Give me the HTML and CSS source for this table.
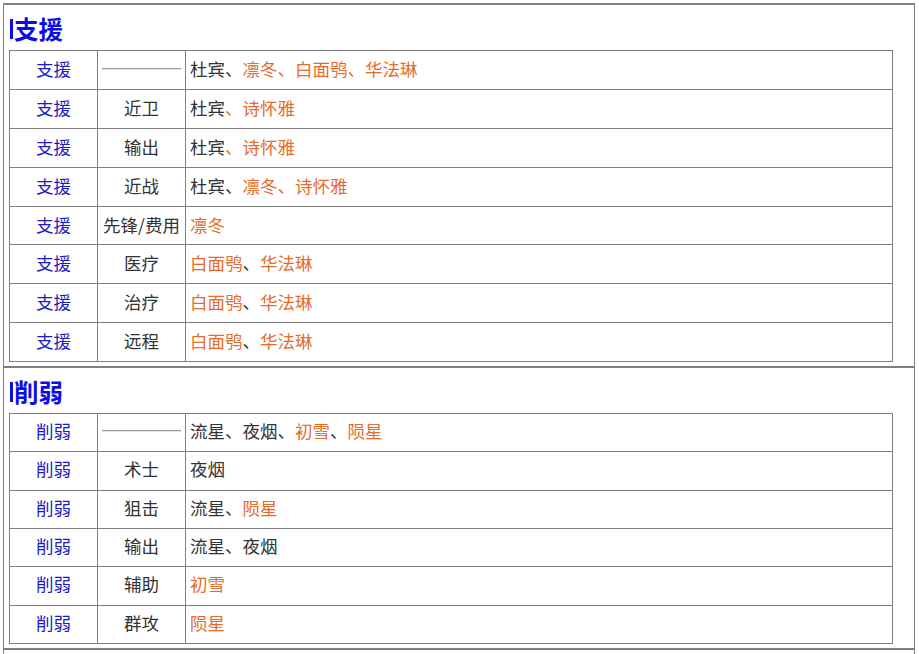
FILE: index.html
```html
<!DOCTYPE html>
<html lang="zh">
<head>
<meta charset="utf-8">
<link rel="stylesheet" href="styles.css">
</head>
<body>
<div class="page">
  <section class="sec">
    <h2 class="title"><span class="bar"></span>支援</h2>
    <table class="tbl">
      <colgroup><col class="c1"><col class="c2"><col></colgroup>
      <tr><td class="k">支援</td><td class="m"><hr class="rule"></td><td class="v">杜宾、<span class="o">凛冬、白面鸮、华法琳</span></td></tr>
      <tr><td class="k">支援</td><td class="m">近卫</td><td class="v">杜宾<span class="o">、诗怀雅</span></td></tr>
      <tr><td class="k">支援</td><td class="m">输出</td><td class="v">杜宾<span class="o">、诗怀雅</span></td></tr>
      <tr><td class="k">支援</td><td class="m">近战</td><td class="v">杜宾、<span class="o">凛冬、诗怀雅</span></td></tr>
      <tr><td class="k">支援</td><td class="m">先锋/费用</td><td class="v"><span class="o">凛冬</span></td></tr>
      <tr><td class="k">支援</td><td class="m">医疗</td><td class="v"><span class="o">白面鸮</span>、<span class="o">华法琳</span></td></tr>
      <tr><td class="k">支援</td><td class="m">治疗</td><td class="v"><span class="o">白面鸮</span>、<span class="o">华法琳</span></td></tr>
      <tr><td class="k">支援</td><td class="m">远程</td><td class="v"><span class="o">白面鸮</span>、<span class="o">华法琳</span></td></tr>
    </table>
  </section>
  <section class="sec">
    <h2 class="title"><span class="bar"></span>削弱</h2>
    <table class="tbl tbl2">
      <colgroup><col class="c1"><col class="c2"><col></colgroup>
      <tr><td class="k">削弱</td><td class="m"><hr class="rule"></td><td class="v">流星、夜烟、<span class="o">初雪</span>、<span class="o">陨星</span></td></tr>
      <tr><td class="k">削弱</td><td class="m">术士</td><td class="v">夜烟</td></tr>
      <tr><td class="k">削弱</td><td class="m">狙击</td><td class="v">流星、<span class="o">陨星</span></td></tr>
      <tr><td class="k">削弱</td><td class="m">输出</td><td class="v">流星、夜烟</td></tr>
      <tr><td class="k">削弱</td><td class="m">辅助</td><td class="v"><span class="o">初雪</span></td></tr>
      <tr><td class="k">削弱</td><td class="m">群攻</td><td class="v"><span class="o">陨星</span></td></tr>
    </table>
  </section>
  <section class="sec sec-end"></section>
</div>
</body>
</html>
```
FILE: styles.css
```css
html, body {
  margin: 0;
  padding: 0;
  background: #fff;
}
body {
  font-family: "Noto Sans CJK SC", "Noto Sans", sans-serif;
  color: #333;
}
.page {
  margin: 3px 4px 0 3px;
}
.sec {
  border-top: 2px solid #808080;
  border-left: 1px solid #808080;
  border-right: 1px solid #808080;
  padding: 0 0 4px 5px;
}
.sec-end {
  height: 20px;
}
.title {
  margin: 0;
  padding: 9px 0 7px 1px;
  font-size: 24.5px;
  line-height: 29px;
  font-weight: bold;
  color: #0d0de8;
  display: flex;
  align-items: center;
}
.bar {
  display: inline-block;
  width: 3px;
  height: 20px;
  background: #0d0de8;
  margin-right: 1px;
}
.tbl {
  border-collapse: collapse;
  width: 884px;
  table-layout: fixed;
  font-size: 17.5px;
  font-weight: 400;
}
.c1, .c2 { width: 88px; }
.tbl td {
  border: 1px solid #808080;
  padding: 7px 4px 8.875px;
  line-height: 22px;
  height: 22px;
  white-space: nowrap;
}
.tbl2 td {
  padding: 6px 4px 9.33px;
}
.k {
  text-align: center;
  color: #1b1bc4;
}
.m {
  text-align: center;
  color: #333;
}
.v {
  text-align: left;
  color: #333;
}
.o {
  color: #e66c2c;
}
.rule {
  margin: 0;
  height: 0;
  border: 0;
  border-top: 1px solid #9a9a9a;
  border-bottom: 1px solid #e4e4e4;
}
```
